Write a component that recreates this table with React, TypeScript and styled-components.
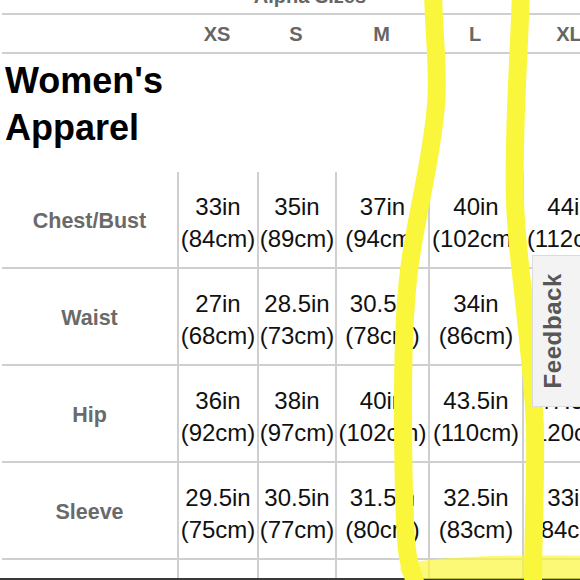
import React from 'react'
import styled, { createGlobalStyle } from 'styled-components'

const GlobalStyle = createGlobalStyle`
  html, body {
    margin: 0;
    padding: 0;
    background: #fff;
  }
  body {
    font-family: 'Liberation Sans', Arial, sans-serif;
  }
`

const COLS = '175px 80px 78px 93px 94px 94px'
const LINE = '#cfcfcf'

const sizes = ['XS', 'S', 'M', 'L', 'XL']

interface Measure {
  label: string
  values: [string, string][]
}

const measures: Measure[] = [
  {
    label: 'Chest/Bust',
    values: [
      ['33in', '(84cm)'],
      ['35in', '(89cm)'],
      ['37in', '(94cm)'],
      ['40in', '(102cm)'],
      ['44in', '(112cm)']
    ]
  },
  {
    label: 'Waist',
    values: [
      ['27in', '(68cm)'],
      ['28.5in', '(73cm)'],
      ['30.5in', '(78cm)'],
      ['34in', '(86cm)'],
      ['38in', '(97cm)']
    ]
  },
  {
    label: 'Hip',
    values: [
      ['36in', '(92cm)'],
      ['38in', '(97cm)'],
      ['40in', '(102cm)'],
      ['43.5in', '(110cm)'],
      ['47.5in', '(120cm)']
    ]
  },
  {
    label: 'Sleeve',
    values: [
      ['29.5in', '(75cm)'],
      ['30.5in', '(77cm)'],
      ['31.5in', '(80cm)'],
      ['32.5in', '(83cm)'],
      ['33in', '(84cm)']
    ]
  },
  {
    label: 'Length',
    values: [
      ['25in', '(64cm)'],
      ['25.5in', '(65cm)'],
      ['26in', '(66cm)'],
      ['26.5in', '(67cm)'],
      ['27in', '(69cm)']
    ]
  }
]

// the marker strokes someone drew over the screenshot
const Highlighter: React.FC = () => (
  <Marks width='580' height='580' viewBox='0 0 580 580'>
    <path
      d='M401 566 C 430 555, 520 555, 590 556 L 590 579 L 410 579 C 403 577, 399 571, 401 566 Z'
      fill='#faf73c'
      opacity='0.7'
    />
    <g fill='none' stroke='#f9f63c' strokeWidth='18' strokeLinecap='round'>
      <path d='M433 -10 C 434 40, 439 70, 436 105 C 432 155, 419 205, 412 250 C 405 290, 403 340, 403 400 C 403 470, 404 520, 407 550 C 409 568, 413 576, 418 590' />
      <path d='M521 -10 C 519 60, 513 130, 515 200 C 516 240, 521 270, 525 310 C 529 350, 534 390, 535 430 C 536 480, 533 530, 533 590' />
    </g>
  </Marks>
)

export default function App() {
  return (
    <>
      <GlobalStyle />
      <Screen>
        <Viewport>
          <Sheet>
            <Caption>Alpha Sizes</Caption>
            <HeaderRow>
              <span />
              {sizes.map(size => (
                <SizeHead key={size}>{size}</SizeHead>
              ))}
            </HeaderRow>
            <TitleRow>
              <Title>Women's Apparel</Title>
            </TitleRow>
            {measures.map(m => (
              <DataRow key={m.label}>
                <Label>{m.label}</Label>
                {m.values.map(([inch, cm], i) => (
                  <Cell key={sizes[i]}>
                    <span>{inch}</span>
                    <span>{cm}</span>
                  </Cell>
                ))}
              </DataRow>
            ))}
          </Sheet>
        </Viewport>
        <BottomEdge />
        <Highlighter />
        <FeedbackTab>
          <span>Feedback</span>
        </FeedbackTab>
      </Screen>
    </>
  )
}

const Screen = styled.div`
  position: relative;
  width: 580px;
  height: 580px;
  overflow: hidden;
  display: flex;
  flex-direction: column;
  background: #fff;
`

const Viewport = styled.div`
  flex: 1;
  min-height: 0;
  overflow: hidden;
  display: flex;
  flex-direction: column;
  padding-left: 2px;
`

const Sheet = styled.div`
  width: 616px;
  flex-shrink: 0;
  display: flex;
  flex-direction: column;
`

const Caption = styled.div`
  margin-top: -14px;
  padding-bottom: 7px;
  line-height: 20px;
  font-size: 20px;
  font-weight: bold;
  color: #666;
  text-align: center;
  border-bottom: 2px solid ${LINE};
`

const HeaderRow = styled.div`
  display: grid;
  grid-template-columns: ${COLS};
  height: 39px;
  box-sizing: border-box;
  border-bottom: 2px solid ${LINE};
`

const SizeHead = styled.div`
  display: flex;
  align-items: center;
  justify-content: center;
  padding-top: 2px;
  font-size: 20px;
  font-weight: bold;
  color: #666;
`

const TitleRow = styled.div`
  display: grid;
  grid-template-columns: ${COLS};
  height: 118px;
`

const Title = styled.h1`
  margin: 0;
  padding: 3px 0 0 3px;
  font-size: 36px;
  line-height: 47px;
  font-weight: bold;
  color: #000;
`

const DataRow = styled.div`
  display: grid;
  grid-template-columns: ${COLS};
  height: 97px;
  flex-shrink: 0;
  box-sizing: border-box;
  border-bottom: 2px solid ${LINE};
`

const Label = styled.div`
  display: flex;
  align-items: center;
  justify-content: center;
  padding-top: 4px;
  font-size: 21.5px;
  font-weight: bold;
  color: #6a6a6a;
`

const Cell = styled.div`
  display: flex;
  flex-direction: column;
  align-items: center;
  justify-content: center;
  padding-top: 6px;
  border-left: 2px solid ${LINE};
  font-size: 24px;
  line-height: 32px;
  color: #111;
  white-space: nowrap;
`

const BottomEdge = styled.div`
  height: 2px;
  flex-shrink: 0;
  background: #3a3a3a;
`

const Marks = styled.svg`
  position: absolute;
  top: 0;
  left: 0;
  pointer-events: none;
  z-index: 2;
`

const FeedbackTab = styled.div`
  position: absolute;
  top: 255px;
  left: 532px;
  z-index: 3;
  width: 40px;
  height: 150px;
  padding-right: 20px;
  display: flex;
  align-items: center;
  justify-content: center;
  background: #f3f3f3;
  border: 1px solid #dcdcdc;
  border-right: none;

  span {
    writing-mode: vertical-rl;
    transform: rotate(180deg);
    font-size: 24px;
    font-weight: bold;
    letter-spacing: 0.6px;
    color: #575757;
  }
`
